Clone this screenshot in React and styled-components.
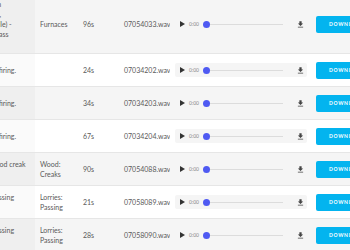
import React from "react";
import styled, { createGlobalStyle } from "styled-components";

const GlobalStyle = createGlobalStyle`
  html, body {
    margin: 0;
    padding: 0;
    background: #fff;
  }
  body {
    font-family: Lato, "Open Sans", sans-serif;
  }
`;

const sounds = [
  {
    title: [
      "Roar of glass furnace in",
      "through the gloryholes,",
      "(Whitefriars glass middle) -",
      "thin sheet of molten glass",
      "flow",
    ],
    category: ["Furnaces"],
    duration: "96s",
    file: "07054033.wav",
  },
  { title: ["Pottery kilns, oil-fired, firing."], category: [], duration: "24s", file: "07034202.wav" },
  { title: ["Pottery kilns, oil-fired, firing."], category: [], duration: "34s", file: "07034203.wav" },
  { title: ["Pottery kilns, oil-fired, firing."], category: [], duration: "67s", file: "07034204.wav" },
  { title: ["Old doors opening, wood creak", "slow"], category: ["Wood:", "Creaks"], duration: "90s", file: "07054088.wav" },
  { title: ["Lorries on the road, passing", "by"], category: ["Lorries:", "Passing"], duration: "21s", file: "07058089.wav" },
  { title: ["Lorries on the road, passing", "by"], category: ["Lorries:", "Passing"], duration: "28s", file: "07058090.wav" },
];

const Page = styled.div`
  width: 350px;
  height: 250px;
  overflow: hidden;
`;

const Table = styled.table`
  border-collapse: collapse;
  table-layout: fixed;
  margin: -5px 0 0 -75px;
  width: 500px;
  color: #5a5a5a;
  font-size: 7px;
  line-height: 10px;
`;

const Row = styled.tr`
  background: ${(p) => (p.$shaded ? "#f5f5f5" : "#fff")};
  border-bottom: 1px solid #e6e6e6;
`;

const Cell = styled.td`
  box-sizing: border-box;
  height: 33px;
  padding: 4px 5px;
  vertical-align: middle;
  white-space: nowrap;
  overflow: hidden;
`;

const TitleCell = styled(Cell)`
  background: ${(p) => (p.$shaded ? "#efefef" : "#fafafa")};
`;

const Player = styled.div`
  display: flex;
  align-items: center;
  width: 132px;
  height: 14px;
  box-sizing: border-box;
  padding: 0 2px 0 5px;
  background: #f5f5f5;
  border-radius: 2px;
`;

const Time = styled.span`
  font-size: 5px;
  color: #888;
  margin: 0 6px 0 4px;
`;

const Track = styled.div`
  position: relative;
  flex: 1;
  height: 1px;
  background: #dcdcdc;
  margin-right: 13px;
`;

const Knob = styled.span`
  position: absolute;
  left: -2px;
  top: -3px;
  width: 7px;
  height: 7px;
  border-radius: 50%;
  background: #4f5af2;
`;

const DownloadButton = styled.button`
  height: 17px;
  padding: 0 13px;
  border: none;
  border-radius: 2px;
  background: #03b4ef;
  color: #fff;
  font-family: Lato, "Open Sans", sans-serif;
  font-weight: 700;
  font-size: 5px;
  letter-spacing: 0.7px;
  white-space: nowrap;
`;

const PlayIcon = () => (
  <svg width="5" height="6" viewBox="0 0 5 6">
    <path d="M0 0 L5 3 L0 6 Z" fill="#333" />
  </svg>
);

const SaveIcon = () => (
  <svg width="9" height="9" viewBox="0 0 24 24">
    <path d="M19 9h-4V3H9v6H5l7 7 7-7zM5 18v2h14v-2H5z" fill="#444" />
  </svg>
);

const Lines = ({ items }) =>
  items.map((t, i) => (
    <React.Fragment key={i}>
      {i > 0 && <br />}
      {t}
    </React.Fragment>
  ));

const App = () => (
  <Page>
    <GlobalStyle />
    <Table>
      <colgroup>
        <col style={{ width: 110 }} />
        <col style={{ width: 43 }} />
        <col style={{ width: 41 }} />
        <col style={{ width: 51 }} />
        <col style={{ width: 141 }} />
        <col style={{ width: 114 }} />
      </colgroup>
      <tbody>
        {sounds.map((s, i) => (
          <Row key={s.file} $shaded={i % 2 === 0}>
            <TitleCell $shaded={i % 2 === 0}>
              <Lines items={s.title} />
            </TitleCell>
            <Cell>
              <Lines items={s.category} />
            </Cell>
            <Cell>{s.duration}</Cell>
            <Cell>{s.file}</Cell>
            <Cell>
              <Player>
                <PlayIcon />
                <Time>0:00</Time>
                <Track>
                  <Knob />
                </Track>
                <SaveIcon />
              </Player>
            </Cell>
            <Cell>
              <DownloadButton>DOWNLOAD</DownloadButton>
            </Cell>
          </Row>
        ))}
      </tbody>
    </Table>
  </Page>
);

export default App;
